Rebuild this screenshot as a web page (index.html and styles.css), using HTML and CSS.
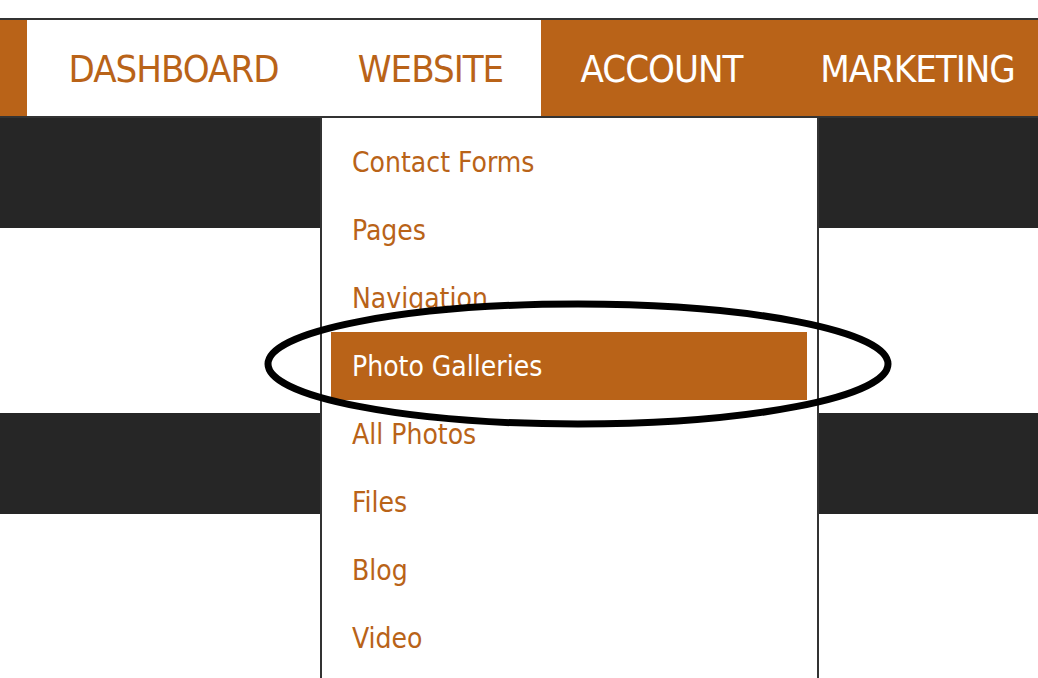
FILE: index.html
```html
<!DOCTYPE html>
<html lang="en">
<head>
  <meta charset="UTF-8">
  <title>Website menu</title>
  <link rel="stylesheet" href="styles.css">
</head>
<body>
  <div class="page">
    <nav class="topnav">
      <div class="nav-edge"></div>
      <a class="nav-item light" href="#">DASHBOARD</a>
      <a class="nav-item light" href="#">WEBSITE</a>
      <a class="nav-item" href="#">ACCOUNT</a>
      <a class="nav-item" href="#">MARKETING</a>
    </nav>
    <div class="band dark tall"></div>
    <div class="band gap"></div>
    <div class="band dark"></div>

    <ul class="dropdown">
      <li><a href="#">Contact Forms</a></li>
      <li><a href="#">Pages</a></li>
      <li><a href="#">Navigation</a></li>
      <li class="active"><a href="#">Photo Galleries</a></li>
      <li><a href="#">All Photos</a></li>
      <li><a href="#">Files</a></li>
      <li><a href="#">Blog</a></li>
      <li><a href="#">Video</a></li>
    </ul>

    <svg class="circle-mark" width="640" height="140" viewBox="0 0 640 140">
      <ellipse cx="320" cy="70" rx="310" ry="60" fill="none" stroke="#000" stroke-width="7"/>
    </svg>
  </div>
</body>
</html>
```

FILE: styles.css
```css
* {
  box-sizing: border-box;
  margin: 0;
  padding: 0;
}
body {
  background: #fff;
  overflow: hidden;
}
.page {
  position: relative;
  padding-top: 18px;
  height: 678px;
  overflow: hidden;
}
.topnav {
  display: flex;
  height: 100px;
  background: #b96318;
  border-top: 2px solid #333;
  border-bottom: 2px solid #333;
  white-space: nowrap;
  overflow: hidden;
}
.nav-edge {
  width: 27px;
  flex: none;
}
.nav-item {
  display: flex;
  align-items: center;
  justify-content: center;
  padding-top: 2px;
  font-family: "DejaVu Sans Condensed", "DejaVu Sans", sans-serif;
  font-stretch: condensed;
  font-size: 38px;
  letter-spacing: -1px;
  color: #fff;
  text-decoration: none;
  flex: none;
}
.nav-item:nth-child(2) { width: 293px; }
.nav-item:nth-child(3) { width: 221px; }
.nav-item:nth-child(4) { width: 241px; }
.nav-item:nth-child(5) { width: 271px; }
.nav-item.light {
  background: #fff;
  color: #b96318;
}
.band.dark {
  background: #262626;
  height: 101px;
}
.band.dark.tall {
  height: 110px;
}
.band.gap {
  height: 185px;
}
.dropdown {
  position: absolute;
  left: 320px;
  top: 118px;
  width: 499px;
  height: 560px;
  list-style: none;
  background: #fff;
  border-left: 2px solid #333;
  border-right: 2px solid #333;
  padding: 10px 10px 0 9px;
  overflow: hidden;
}
.dropdown li a {
  display: flex;
  align-items: center;
  height: 68px;
  padding-left: 21px;
  font-family: "DejaVu Sans Condensed", "Liberation Sans", sans-serif;
  font-stretch: condensed;
  font-size: 28px;
  color: #b96318;
  text-decoration: none;
}
.dropdown li.active a {
  background: #b96318;
  color: #fff;
}
.circle-mark {
  position: absolute;
  left: 258px;
  top: 294px;
}
```
